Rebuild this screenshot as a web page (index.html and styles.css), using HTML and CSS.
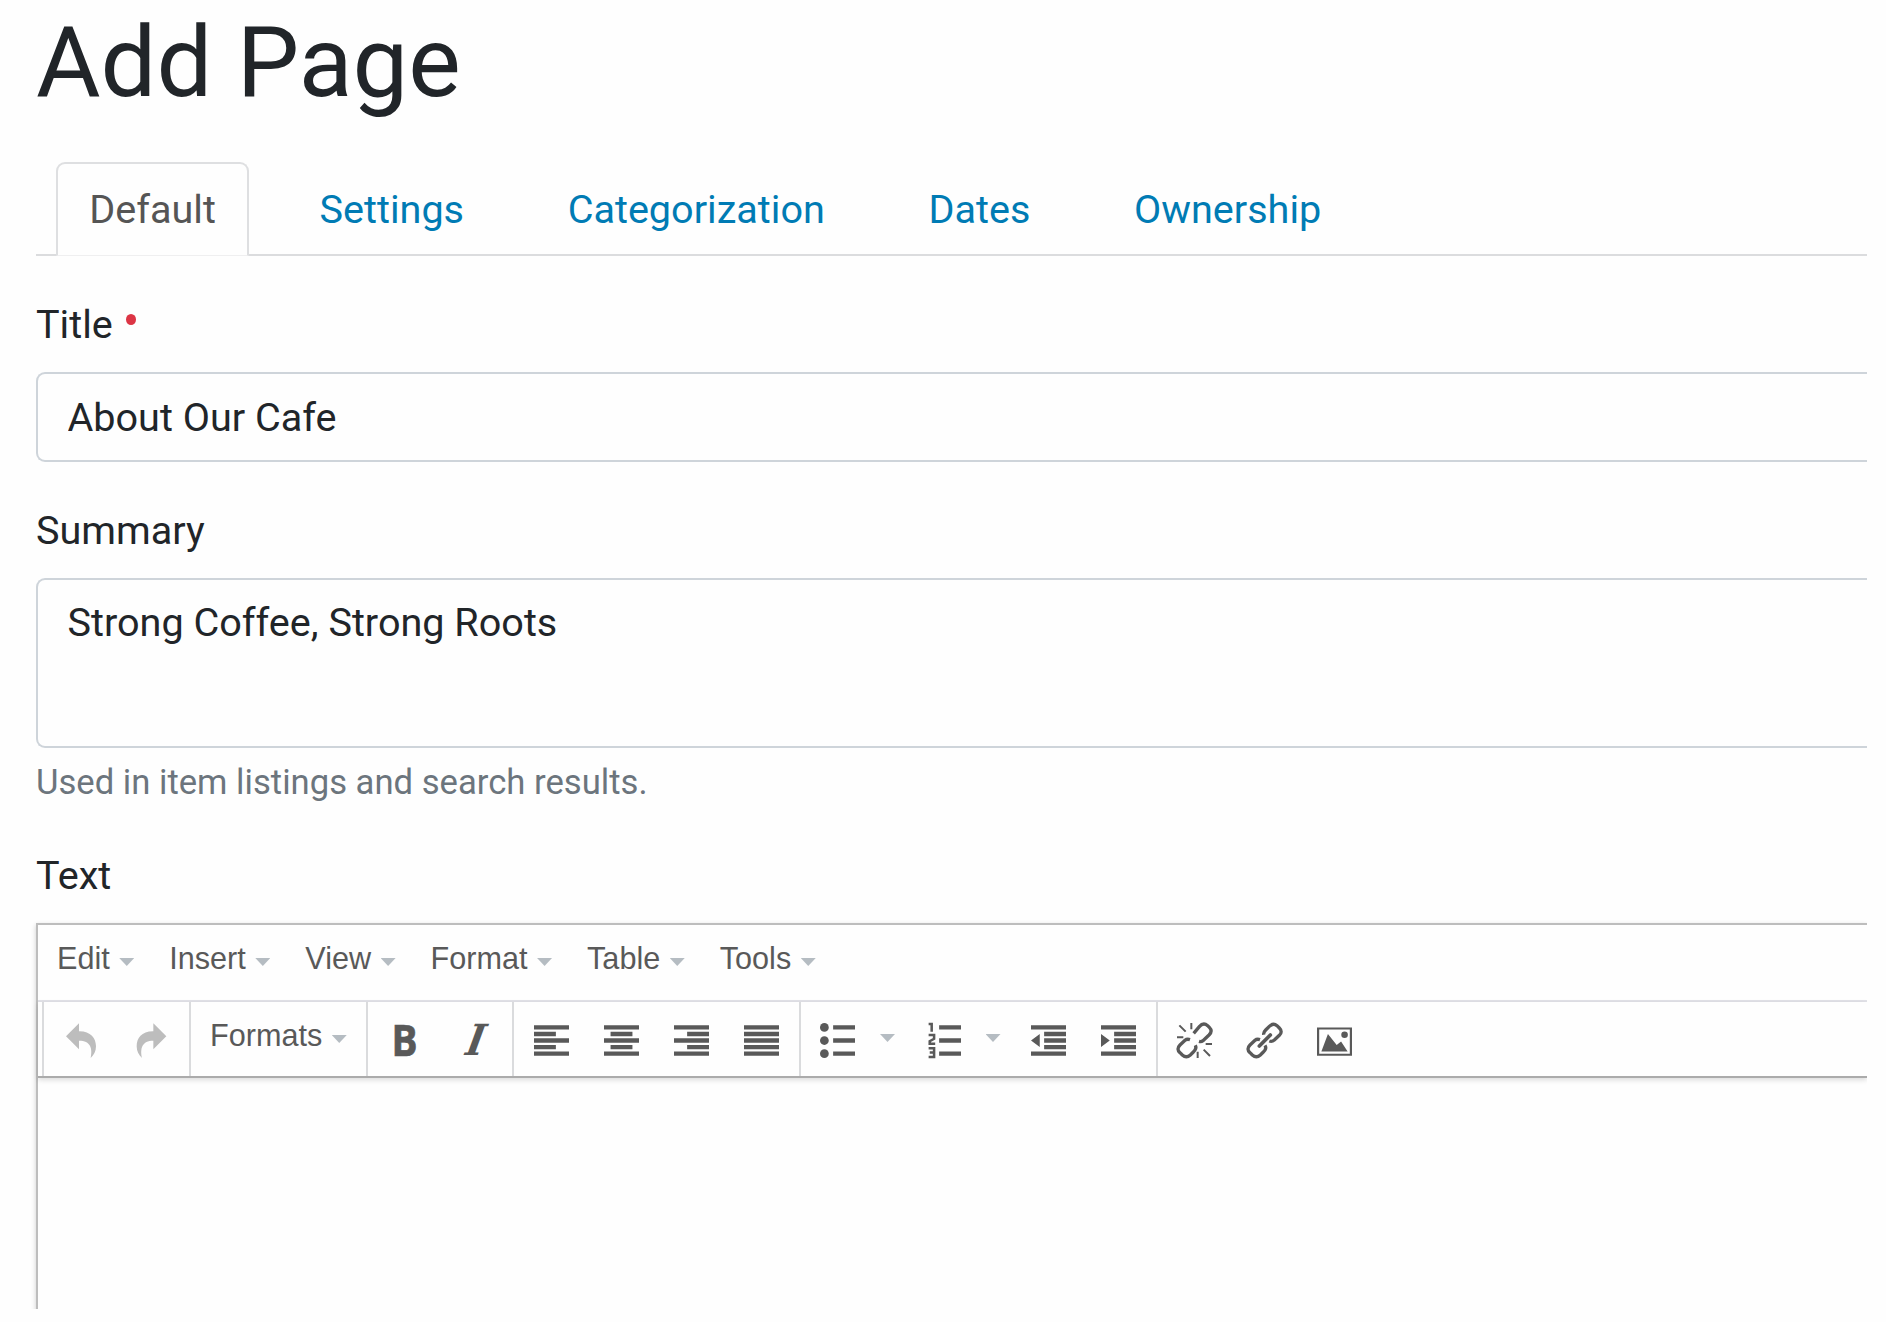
FILE: index.html
```html
<!DOCTYPE html>
<html lang="en">
<head>
<meta charset="utf-8">
<title>Add Page</title>
<link rel="stylesheet" href="styles.css">
</head>
<body>
<main class="page">
  <h1 class="page-title">Add Page</h1>
  <nav class="tabs">
    <a class="tab active">Default</a>
    <a class="tab">Settings</a>
    <a class="tab">Categorization</a>
    <a class="tab">Dates</a>
    <a class="tab">Ownership</a>
  </nav>
  <label class="label" for="title">Title <span class="required"></span></label>
  <input class="control" id="title" type="text" value="About Our Cafe">
  <label class="label label-summary" for="summary">Summary</label>
  <textarea class="control area" id="summary">Strong Coffee, Strong Roots</textarea>
  <p class="help">Used in item listings and search results.</p>
  <div class="label label-text">Text</div>
  <section class="editor">
    <div class="menubar">
      <span class="menu">Edit<i class="caret"></i></span>
      <span class="menu">Insert<i class="caret"></i></span>
      <span class="menu">View<i class="caret"></i></span>
      <span class="menu">Format<i class="caret"></i></span>
      <span class="menu">Table<i class="caret"></i></span>
      <span class="menu">Tools<i class="caret"></i></span>
    </div>
    <div class="toolbar">
      <div class="group history">
        <span class="btn"><svg class="icon" viewBox="0 0 105 105"><path d="M6 40 45 1V24.500C80 24 96 45 96 70 96 85 90 95 80 105 86 76 80 53 45 53V79z"/></svg></span>
        <span class="btn"><svg class="icon" viewBox="0 0 105 105"><path d="M97 40 58 1V24.500C23 24 8 45 8 70 8 85 14 95 24 105 18 76 24 53 58 53V79z"/></svg></span>
      </div>
      <div class="group formats"><span class="menu">Formats<i class="caret"></i></span></div>
      <div class="group styles">
        <span class="btn"><b class="bold">B</b></span>
        <span class="btn"><b class="italic">I</b></span>
      </div>
      <div class="group">
        <span class="btn"><svg class="icon" viewBox="0 0 16 16"><path d="M0 1h16v2H0zM0 4h10v2H0zM0 7h16v2H0zM0 10h10v2H0zM0 13h16v2H0z"/></svg></span>
        <span class="btn"><svg class="icon" viewBox="0 0 16 16"><path d="M0 1h16v2H0zM3 4h10v2H3zM0 7h16v2H0zM3 10h10v2H3zM0 13h16v2H0z"/></svg></span>
        <span class="btn"><svg class="icon" viewBox="0 0 16 16"><path d="M0 1h16v2H0zM6 4h10v2H6zM0 7h16v2H0zM6 10h10v2H6zM0 13h16v2H0z"/></svg></span>
        <span class="btn"><svg class="icon" viewBox="0 0 16 16"><path d="M0 1h16v2H0zM0 4h16v2H0zM0 7h16v2H0zM0 10h16v2H0zM0 13h16v2H0z"/></svg></span>
      </div>
      <div class="group lists">
        <span class="btn split"><svg class="icon" viewBox="0 0 16 16"><path d="M6 1h10v2H6zM6 7h10v2H6zM6 13h10v2H6z"/><circle cx="2" cy="2" r="2"/><circle cx="2" cy="8" r="2"/><circle cx="2" cy="14" r="2"/></svg><i class="caret"></i></span>
        <span class="btn split"><svg class="icon" viewBox="0 0 16 16"><path d="M6 1h10v2H6zM6 7h10v2H6zM6 13h10v2H6z"/><path class="digits" d="M1.200.500H2.600V4M1.200 5.500H3.700V7.200L1.700 8.300V9.500H4.200M1.200 11.500H3.700V15.500H1.200M1.700 13.500H3.700"/></svg><i class="caret"></i></span>
        <span class="btn"><svg class="icon" viewBox="0 0 16 16"><path d="M0 1h16v2H0zM6 4h10v2H6zM6 7h10v2H6zM6 10h10v2H6zM0 13h16v2H0zM4 5v6L0 8z"/></svg></span>
        <span class="btn"><svg class="icon" viewBox="0 0 16 16"><path d="M0 1h16v2H0zM6 4h10v2H6zM6 7h10v2H6zM6 10h10v2H6zM0 13h16v2H0zM0 5v6l4-3z"/></svg></span>
      </div>
      <div class="group insert">
        <span class="btn"><svg class="icon line" viewBox="0 0 105 105"><path d="M50 31 67 11Q79-3 92 8L97 13Q108 24 96 36L78 53Q73 57 66 55"/><path d="M55 67Q60 77 49 87L40 96Q28 107 16 96L9 89Q-3 78 9 66L24 52Q30 47 39 50"/><path class="ray" d="M7 7 26 26M43 0V19M0 43H19M86 63H105M62 86V105M80 80 99 99"/></svg></span>
        <span class="btn"><svg class="icon line" viewBox="0 0 105 105"><path d="M50 35Q49 28 56 21L67 10Q79-2 90 8L97 15Q108 26 97 37L82 51Q75 57 67 54"/><path d="M54 67Q60 77 49 87L40 96Q28 107 16 96L9 89Q-3 78 9 66L24 52Q30 47 39 50"/><path class="bar" d="M37 69 70 36"/></svg></span>
        <span class="btn"><svg class="icon" viewBox="0 0 16 16"><path fill-rule="evenodd" d="M0 2h16v13H0zM1 3v11h14V3zM2 13l3-8 4 5 2-1.500L14 13z"/><circle cx="12.600" cy="5.400" r="1.500"/></svg></span>
      </div>
    </div>
    <div class="content"></div>
  </section>
</main>
</body>
</html>
```
FILE: styles.css
```css
* { box-sizing: border-box; }
body { margin: 0; background: #fefefe; font-family: Roboto, sans-serif; font-size: 39.6px; line-height: 59px; color: #212529; }
.page { width: 1867px; height: 1309px; padding: 3px 0 0 36px; overflow: hidden; }
.page-title { margin: 0 0 41px; font-size: 99px; line-height: 118px; font-weight: 400; }
.tabs { display: flex; height: 94px; padding-left: 20px; gap: 37px; background: linear-gradient(#dbdcde, #dbdcde) bottom / 100% 2px no-repeat; }
.tab { padding: 16px 31.3px 15px; border: 2px solid transparent; border-bottom: 0; color: #007bb4; white-space: nowrap; }
.tab.active { color: #555; background: #fefefe; border-color: #dedfe1; border-radius: 9px 9px 0 0; border-bottom: 1px solid #efeff0; }
.label { display: flex; margin-top: 39px; height: 77px; }
.required { width: 10px; height: 11px; margin: 19px 0 0 13.5px; border-radius: 50%; background: #dc3545; }
.control { display: block; width: 100%; height: 90px; margin: 0; padding: 13px 30px 13px 29.5px; border: 2px solid #ced4da; border-right: 0; border-radius: 9px 0 0 9px; background: #fefefe; color: inherit; font: inherit; outline: 0; }
.area { height: 170px; resize: none; overflow: hidden; }
.label-summary { height: 77px; }
.help { margin: 8px 0 0; font-size: 34.65px; line-height: 52px; color: #6c757d; }
.label-text { margin-top: 38px; }
.editor { height: 420px; border: 2px solid #bdbdbd; border-right: 0; box-shadow: 0 2px 5px rgba(0, 0, 0, .2); color: #595959; font: 30.625px/44px "Liberation Sans", Arial, sans-serif; }
.menubar { display: flex; height: 77px; padding: 11px 0 0 19px; gap: 35px; border-bottom: 2px solid #e2e2e8; }
.menu { display: flex; height: 44px; }
.caret { width: 15px; height: 8px; margin: 22px 0 0 9.5px; background: #b5bcc2; clip-path: polygon(0 0, 100% 0, 50% 100%); }
.toolbar { display: flex; height: 76px; padding-left: 4px; border-bottom: 2px solid #ababab; box-shadow: 0 2px 5px rgba(0, 0, 0, .14); }
.group { display: flex; width: 287px; padding-left: 3px; border-left: 2px solid #dadbdd; }
.history { width: 147px; fill: #bdbdbd; }
.formats { width: 177px; padding: 11px 0 0 19px; }
.styles { width: 146px; }
.lists { width: 357px; padding-left: 2px; }
.insert { width: 220px; padding-left: 2px; }
.btn { display: flex; flex: none; width: 70px; height: 74px; padding: 21px 0 0 17px; }
.split { width: 105.5px; }
.split .caret { margin: 11px 0 0 25px; }
.icon { flex: none; width: 35px; height: 35px; overflow: visible; }
.group:not(.history) .icon { fill: #595959; }
.group .line { fill: none !important; stroke: #595959; stroke-width: 10; }
.line .ray { stroke-width: 6; }
.line .bar { stroke-width: 11; stroke-linecap: round; }
.icon .digits { fill: none; stroke: #595959; stroke-width: 1.15; }
.bold { width: 35px; text-align: center; font: 700 43px/35px "Open Sans", sans-serif; -webkit-text-stroke: .7px #595959; transform: translate(-1px, -1px) scaleX(.9); }
.italic { width: 35px; text-align: center; font: 700 43px/35px "DejaVu Serif", serif; transform: translate(-3px, 0) skewX(-20deg) scaleX(.88); }
```
